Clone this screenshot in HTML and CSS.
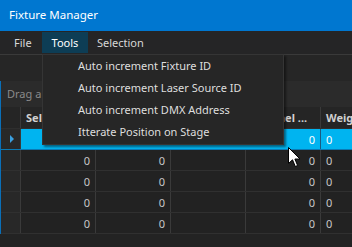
FILE: index.html
```html
<!DOCTYPE html>
<html>
<head>
<meta charset="utf-8">
<link rel="stylesheet" href="styles.css">
</head>
<body>
<div class="window">
  <div class="titlebar">Fixture Manager</div>
  <div class="menubar">
    <span class="menu-item file">File</span>
    <span class="menu-item active">Tools</span>
    <span class="menu-item sel">Selection</span>
  </div>
  <div class="toolbar"></div>
  <div class="grouppanel">Drag a column header here</div>
  <div class="grid">
    <div class="row header">
      <div class="ind"></div>
      <div class="cell c1">Sel</div>
      <div class="cell c2"></div>
      <div class="cell c3"></div>
      <div class="cell c4">Channel ...</div>
      <div class="cell c5">Weight</div>
    </div>
    <div class="row selected">
      <div class="ind"><span class="tri"></span></div>
      <div class="cell c1 num"></div>
      <div class="cell c2 num"></div>
      <div class="cell c3"></div>
      <div class="cell c4 num">0</div>
      <div class="cell c5">0</div>
    </div>
    <div class="row">
      <div class="ind"></div>
      <div class="cell c1 num">0</div>
      <div class="cell c2 num">0</div>
      <div class="cell c3"></div>
      <div class="cell c4 num">0</div>
      <div class="cell c5">0</div>
    </div>
    <div class="row">
      <div class="ind"></div>
      <div class="cell c1 num">0</div>
      <div class="cell c2 num">0</div>
      <div class="cell c3"></div>
      <div class="cell c4 num">0</div>
      <div class="cell c5">0</div>
    </div>
    <div class="row">
      <div class="ind"></div>
      <div class="cell c1 num">0</div>
      <div class="cell c2 num">0</div>
      <div class="cell c3"></div>
      <div class="cell c4 num">0</div>
      <div class="cell c5">0</div>
    </div>
    <div class="row">
      <div class="ind"></div>
      <div class="cell c1 num">0</div>
      <div class="cell c2 num">0</div>
      <div class="cell c3"></div>
      <div class="cell c4 num">0</div>
      <div class="cell c5">0</div>
    </div>
  </div>

  <div class="dropdown">
    <div class="dd-item">Auto increment Fixture ID</div>
    <div class="dd-item">Auto increment Laser Source ID</div>
    <div class="dd-item">Auto increment DMX Address</div>
    <div class="dd-item">Itterate Position on Stage</div>
  </div>

  <svg class="cursor" width="13" height="21" viewBox="0 0 13 21">
    <path d="M0.5 0.5 L0.5 16.5 L4.5 12.8 L7.3 19.5 L9.6 18.5 L6.9 12 L12 12 Z" fill="#fff" stroke="#000" stroke-width="1"/>
  </svg>
</div>
</body>
</html>
```
FILE: styles.css
```css
html, body {
  margin: 0;
  padding: 0;
}
body {
  width: 352px;
  height: 247px;
  overflow: hidden;
  background: #232323;
  font-family: "Noto Sans", "Open Sans", sans-serif;
  font-size: 11px;
  color: #dcdcdc;
}
.window {
  position: relative;
  width: 352px;
  height: 247px;
  overflow: hidden;
}
.titlebar {
  height: 31px;
  line-height: 30px;
  background: #0077d0;
  color: #fff;
  font-size: 11.5px;
  padding-left: 9px;
}
.menubar {
  height: 23px;
  background: #252526;
  display: flex;
  align-items: stretch;
}
.menu-item {
  display: flex;
  align-items: center;
  box-sizing: border-box;
  color: #d8d8d8;
  height: 21px;
  margin-top: 1px;
}
.menu-item.file {
  width: 42px;
  padding-left: 14px;
}
.menu-item.active {
  background: #0d3d55;
  color: #fff;
  width: 46px;
  justify-content: center;
}
.menu-item.sel {
  padding-left: 9px;
}
.toolbar {
  height: 26px;
  background: #262626;
  border-top: 1px solid #3a3a3a;
}
.grouppanel {
  height: 26px;
  line-height: 26px;
  background: #2b2b2b;
  color: #8a8a8a;
  padding-left: 6px;
  white-space: nowrap;
  border-left: 1px solid #0a6fb8;
}
.grid {
  border-left: 1px solid #0a6fb8;
  background: #222;
}
.row {
  display: flex;
  height: 20px;
  border-bottom: 1px solid #303030;
}
.row.header {
  height: 21px;
  background: #252525;
  border-bottom: 1px solid #2e2e2e;
  font-weight: bold;
  color: #cfcfcf;
}
.ind {
  width: 19px;
  flex: none;
  background: #282828;
  border-right: 1px solid #3a3a3a;
  position: relative;
}
.header .ind {
  background: #252525;
}
.tri {
  position: absolute;
  left: 9px;
  top: 6px;
  width: 0;
  height: 0;
  border-top: 4px solid transparent;
  border-bottom: 4px solid transparent;
  border-left: 4px solid #3aa0e0;
}
.cell {
  flex: none;
  box-sizing: border-box;
  border-right: 1px solid #3a3a3a;
  padding: 0 5px;
  display: flex;
  align-items: center;
  white-space: nowrap;
  overflow: hidden;
  color: #c8c8c8;
}
.header .cell {
  color: #d0d0d0;
}
.cell.num {
  justify-content: flex-end;
}
.c1 { width: 75px; }
.c2 { width: 75px; }
.c3 { width: 75px; }
.c4 { width: 75px; }
.c5 { width: 40px; border-right: none; }
.header .c4 { padding-left: 4px; }
.row.selected {
  border-bottom: 1px solid #0a7ab4;
}
.row.selected .cell {
  background: #00b4f0;
  color: #fff;
  border-right-color: #00b4f0;
}
.row.selected .c4 {
  border-right-color: #1a5a80;
}
.dropdown {
  position: absolute;
  left: 42px;
  top: 54px;
  width: 240px;
  height: 89px;
  background: #262626;
  border: 1px solid #353535;
  box-shadow: 2px 2px 2px rgba(0,0,0,0.45);
}
.dd-item {
  height: 22px;
  line-height: 22px;
  padding-left: 35px;
  color: #dedede;
  white-space: nowrap;
}
.cursor {
  position: absolute;
  left: 288px;
  top: 147px;
}
```
